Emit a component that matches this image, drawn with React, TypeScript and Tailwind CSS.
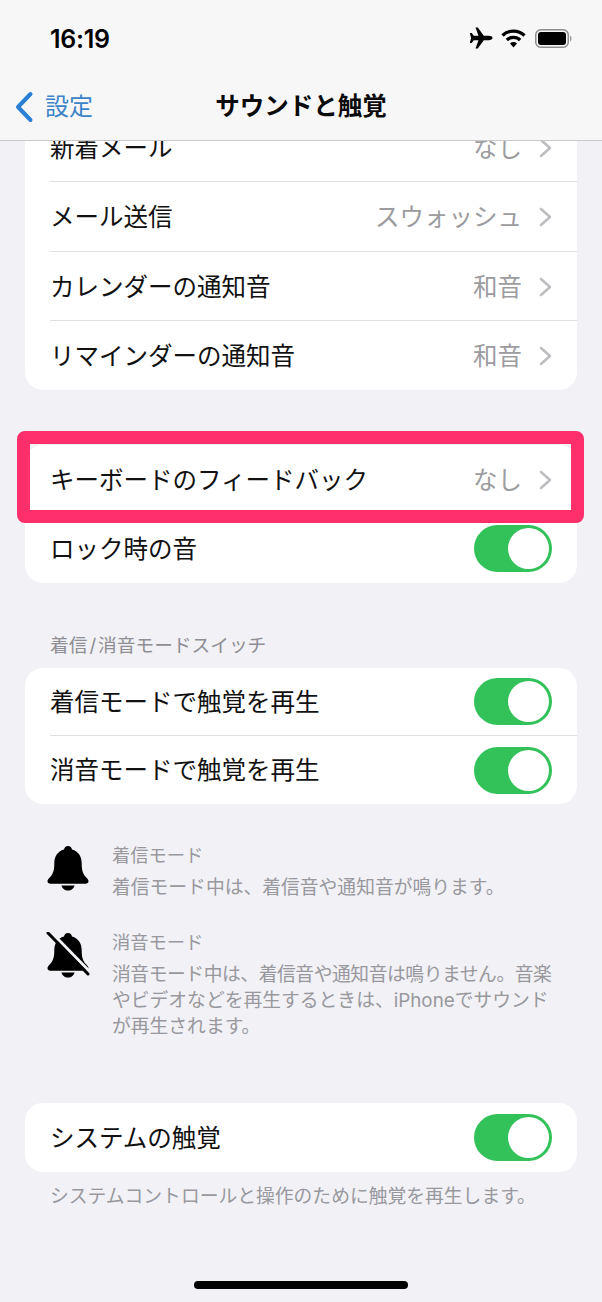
import React from "react";

type RowProps = {
  label: string;
  value?: string;
  toggle?: boolean;
  divider?: boolean;
  className?: string;
};

function Chevron() {
  return (
    <svg width="13" height="20" viewBox="0 0 13 20" fill="none" className="ml-[17px]">
      <path d="M2 2l9 8-9 8" stroke="#bdbdc2" strokeWidth="2.6" strokeLinecap="round" strokeLinejoin="round" />
    </svg>
  );
}

function Toggle() {
  return (
    <div className="w-[78px] h-[47px] rounded-full bg-[#33c25a] flex items-center justify-end pr-[3px]">
      <div className="w-[41px] h-[41px] rounded-full bg-white" />
    </div>
  );
}

function Row({ label, value, toggle, divider, className }: RowProps) {
  return (
    <div className={`flex items-center pl-[25px] ${className || ""}`.trim()}>
      <div
        className={`flex-1 h-full flex items-center pr-[25px] ${
          divider ? "border-b border-[#dfdfe2]" : ""
        }`}
      >
        <span className="flex-1 text-[24.5px] leading-[32px] text-[#111]">{label}</span>
        {value && <span className="text-[24.5px] leading-[32px] text-[#9c9ca0]">{value}</span>}
        {value && <Chevron />}
        {toggle && <Toggle />}
      </div>
    </div>
  );
}

function Group({ children, className }: { children: React.ReactNode; className?: string }) {
  return (
    <div className={`mx-[25px] bg-white rounded-[18px] overflow-hidden ${className || ""}`.trim()}>
      {children}
    </div>
  );
}

function Bell({ muted }: { muted?: boolean }) {
  return (
    <svg width="44" height="46" viewBox="0 0 44 46" className="shrink-0">
      <path
        d="M22 1c-2.200 0-3.800 1.500-4 3.600C11.500 6.400 8.300 11.700 8.300 18.500c0 7.600-1.600 10.800-4.800 14.300C2.400 34 1.500 35 1.500 36.300c0 1.500 1.200 2.400 3 2.400h35c1.800 0 3-.9 3-2.400 0-1.300-.9-2.300-2-3.500-3.200-3.500-4.800-6.700-4.800-14.300 0-6.800-3.200-12.100-9.700-13.900C25.800 2.500 24.200 1 22 1z"
        fill="#000"
      />
      <path d="M15.500 40.500h13c-.5 2.900-3.200 5-6.500 5s-6-2.100-6.500-5z" fill="#000" />
      {muted && (
        <>
          <path d="M4 -1l40 41" stroke="#f1f1f6" strokeWidth="3" />
          <path d="M2 1l40 41" stroke="#000" strokeWidth="3" strokeLinecap="round" />
        </>
      )}
    </svg>
  );
}

function Note({ muted, title, children, className }: { muted?: boolean; title: string; children: React.ReactNode; className?: string }) {
  return (
    <div className={`flex pl-[46px] pr-[46px] ${className || ""}`.trim()}>
      <div className="w-[66px] pt-[3px]">
        <Bell muted={muted} />
      </div>
      <div className="flex-1 text-[18.8px] leading-[26px] text-[#98989d]">
        <p className="mb-[7px] text-[18.3px]">{title}</p>
        <p>{children}</p>
      </div>
    </div>
  );
}

export default function App() {
  return (
    <div className="relative w-[602px] h-[1302px] overflow-hidden bg-[#f1f1f6] font-['Inter','Noto_Sans_CJK_JP',sans-serif]">
      {/* nav bar sits over the scrolled list */}
      <header className="absolute z-10 top-0 left-0 right-0 h-[141px] bg-[#f7f7f8] border-b border-[#c9c9cc]">
        <div className="flex items-center justify-between h-[76px] pl-[50px] pr-[30px]">
          <span className="mt-[3px] text-[25px] font-semibold text-black tracking-[-0.3px]">16:19</span>
          <div className="flex items-center">
            <svg width="24" height="22" viewBox="0 0 24 22" className="mr-[8px]">
              <path
                d="M23.500 11c0-1.300-1.800-2.200-4-2.200h-4.700L8.800.5H6.500l3 8.300H4.800L2.700 6H.8l1.300 5-1.300 5h1.900l2.100-2.800h4.700l-3 8.300h2.300l6-8.300h4.700c2.200 0 4-.9 4-2.200z"
                fill="#000"
              />
            </svg>
            <svg width="25" height="19" viewBox="0 0 25 19" className="mr-[9px]">
              <path d="M1.500 6.500a15.800 15.800 0 0 1 22 0" stroke="#000" strokeWidth="3.200" fill="none" />
              <path d="M5.800 11a9.600 9.600 0 0 1 13.400 0" stroke="#000" strokeWidth="3.200" fill="none" />
              <path d="M9 14.500a5 5 0 0 1 7 0l-3.500 4z" fill="#000" />
            </svg>
            <svg width="37" height="19" viewBox="0 0 37 19">
              <rect x="0.750" y="0.750" width="32.500" height="17.500" rx="5" fill="none" stroke="#8d8d8d" strokeWidth="1.500" />
              <rect x="3" y="3" width="28" height="13" rx="3" fill="#000" />
              <path d="M35 6.500c1 .4 1.500 1.600 1.500 3s-.5 2.600-1.500 3z" fill="#9a9a9a" />
            </svg>
          </div>
        </div>
        <div className="relative flex items-center justify-center h-[60px]">
          <div className="absolute left-[14px] top-[15px] flex items-center">
            <svg width="20" height="32" viewBox="0 0 20 32" fill="none">
              <path d="M16.500 3L4 16l12.500 13" stroke="#2a7fd6" strokeWidth="4" strokeLinecap="round" strokeLinejoin="round" />
            </svg>
            <span className="ml-[11px] text-[24px] leading-[32px] text-[#3c84c8]">設定</span>
          </div>
          <h1 className="text-[24.5px] leading-[32px] font-bold text-[#0a0a0a]">サウンドと触覚</h1>
        </div>
      </header>

      <main className="pt-[113px]">
        <Group>
          <Row label="新着メール" value="なし" divider className="h-[69px] pt-[2px]" />
          <Row label="メール送信" value="スウォッシュ" divider className="h-[69.5px] pt-[2px]" />
          <Row label="カレンダーの通知音" value="和音" divider className="h-[69.5px] pt-[2px]" />
          <Row label="リマインダーの通知音" value="和音" className="h-[68.5px] pt-[1px]" />
        </Group>

        <div className="relative mt-[55.5px]">
          <Group>
            <Row label="キーボードのフィードバック" value="なし" className="h-[69px]" />
            <Row label="ロック時の音" toggle className="h-[69px]" />
          </Group>
          {/* highlight box drawn on top of the screenshot */}
          <div className="absolute left-[17px] top-[-14px] w-[567px] h-[92px] border-[13px] border-[#fe2f6b] rounded-[8px]" />
        </div>

        <p className="mt-[50px] mb-[9px] pl-[50px] text-[18.7px] leading-[26px] text-[#8e8e93]">
          着信<span className="mx-[2px]">/</span>消音モードスイッチ
        </p>
        <Group>
          <Row label="着信モードで触覚を再生" toggle divider className="h-[68px]" />
          <Row label="消音モードで触覚を再生" toggle className="h-[68px]" />
        </Group>

        <Note title="着信モード" className="mt-[38px]">
          着信モード中は、着信音や通知音が鳴ります。
        </Note>
        <Note muted title="消音モード" className="mt-[28px]">
          <span className="block tracking-[-0.45px]">消音モード中は、着信音や通知音は鳴りません。音楽</span>
          やビデオなどを再生するときは、iPhoneでサウンドが再生されます。
        </Note>

        <Group className="mt-[63px]">
          <Row label="システムの触覚" toggle className="h-[69px]" />
        </Group>
        <p className="mt-[12px] pl-[50px] text-[18.8px] leading-[26px] text-[#98989d]">
          システムコントロールと操作のために触覚を再生します。
        </p>
      </main>

      <div className="absolute bottom-[13px] left-[194px] w-[214px] h-[8px] rounded-full bg-black" />
    </div>
  );
}
